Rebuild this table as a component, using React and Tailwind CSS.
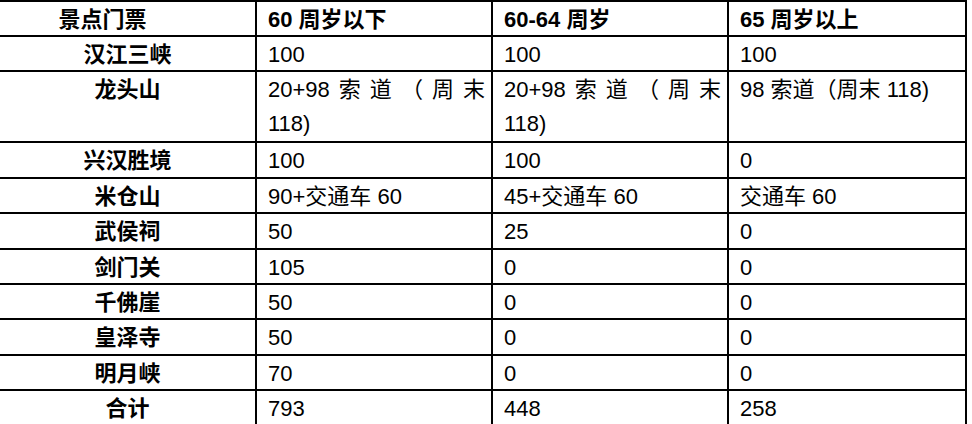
const rows = [
  { name: "汉江三峡", a: "100", b: "100", c: "100" },
  { name: "龙头山", double: true, c: "98 索道（周末 118)" },
  { name: "兴汉胜境", a: "100", b: "100", c: "0" },
  { name: "米仓山", a: "90+交通车 60", b: "45+交通车 60", c: "交通车 60" },
  { name: "武侯祠", a: "50", b: "25", c: "0" },
  { name: "剑门关", a: "105", b: "0", c: "0" },
  { name: "千佛崖", a: "50", b: "0", c: "0" },
  { name: "皇泽寺", a: "50", b: "0", c: "0" },
  { name: "明月峡", a: "70", b: "0", c: "0" },
  { name: "合计", a: "793", b: "448", c: "258" },
];

const Cable = () => (
  <div className="flex flex-col">
    <div className="flex justify-between pr-[6px]">
      <span>20+98</span>
      <span>索</span>
      <span>道</span>
      <span>（</span>
      <span>周</span>
      <span>末</span>
    </div>
    <div>118)</div>
  </div>
);

const Cell = ({ children, bold }) => (
  <div className={`w-[236px] border-l-2 border-black pl-[11px] pt-[1px] whitespace-nowrap ${bold ? "font-bold" : ""}`}>
    {children}
  </div>
);

const App = () => {
  return (
    <div
      className="w-[972px] h-[424px] bg-white text-black text-[22px] leading-[34px] overflow-hidden"
      style={{ fontFamily: '"Liberation Sans", "Noto Sans CJK SC", sans-serif' }}
    >
      <div className="w-[967px] border-t-2 border-r-2 border-black">
        <div className="flex h-[35px] border-b-2 border-black">
          <div className="w-[255px] text-center font-bold pt-[1px] pr-[50px]">景点门票</div>
          <Cell bold>60 周岁以下</Cell>
          <Cell bold>60-64 周岁</Cell>
          <Cell bold>65 周岁以上</Cell>
        </div>
        {rows.map((r) => (
          <div
            key={r.name}
            className={`flex border-b-2 border-black ${r.double ? "h-[71px]" : "h-[35.4px]"}`}
          >
            <div className="w-[255px] text-center font-bold pt-[1px]">{r.name}</div>
            <Cell>{r.double ? <Cable /> : r.a}</Cell>
            <Cell>{r.double ? <Cable /> : r.b}</Cell>
            <Cell>{r.c}</Cell>
          </div>
        ))}
      </div>
    </div>
  );
};

export default App;
